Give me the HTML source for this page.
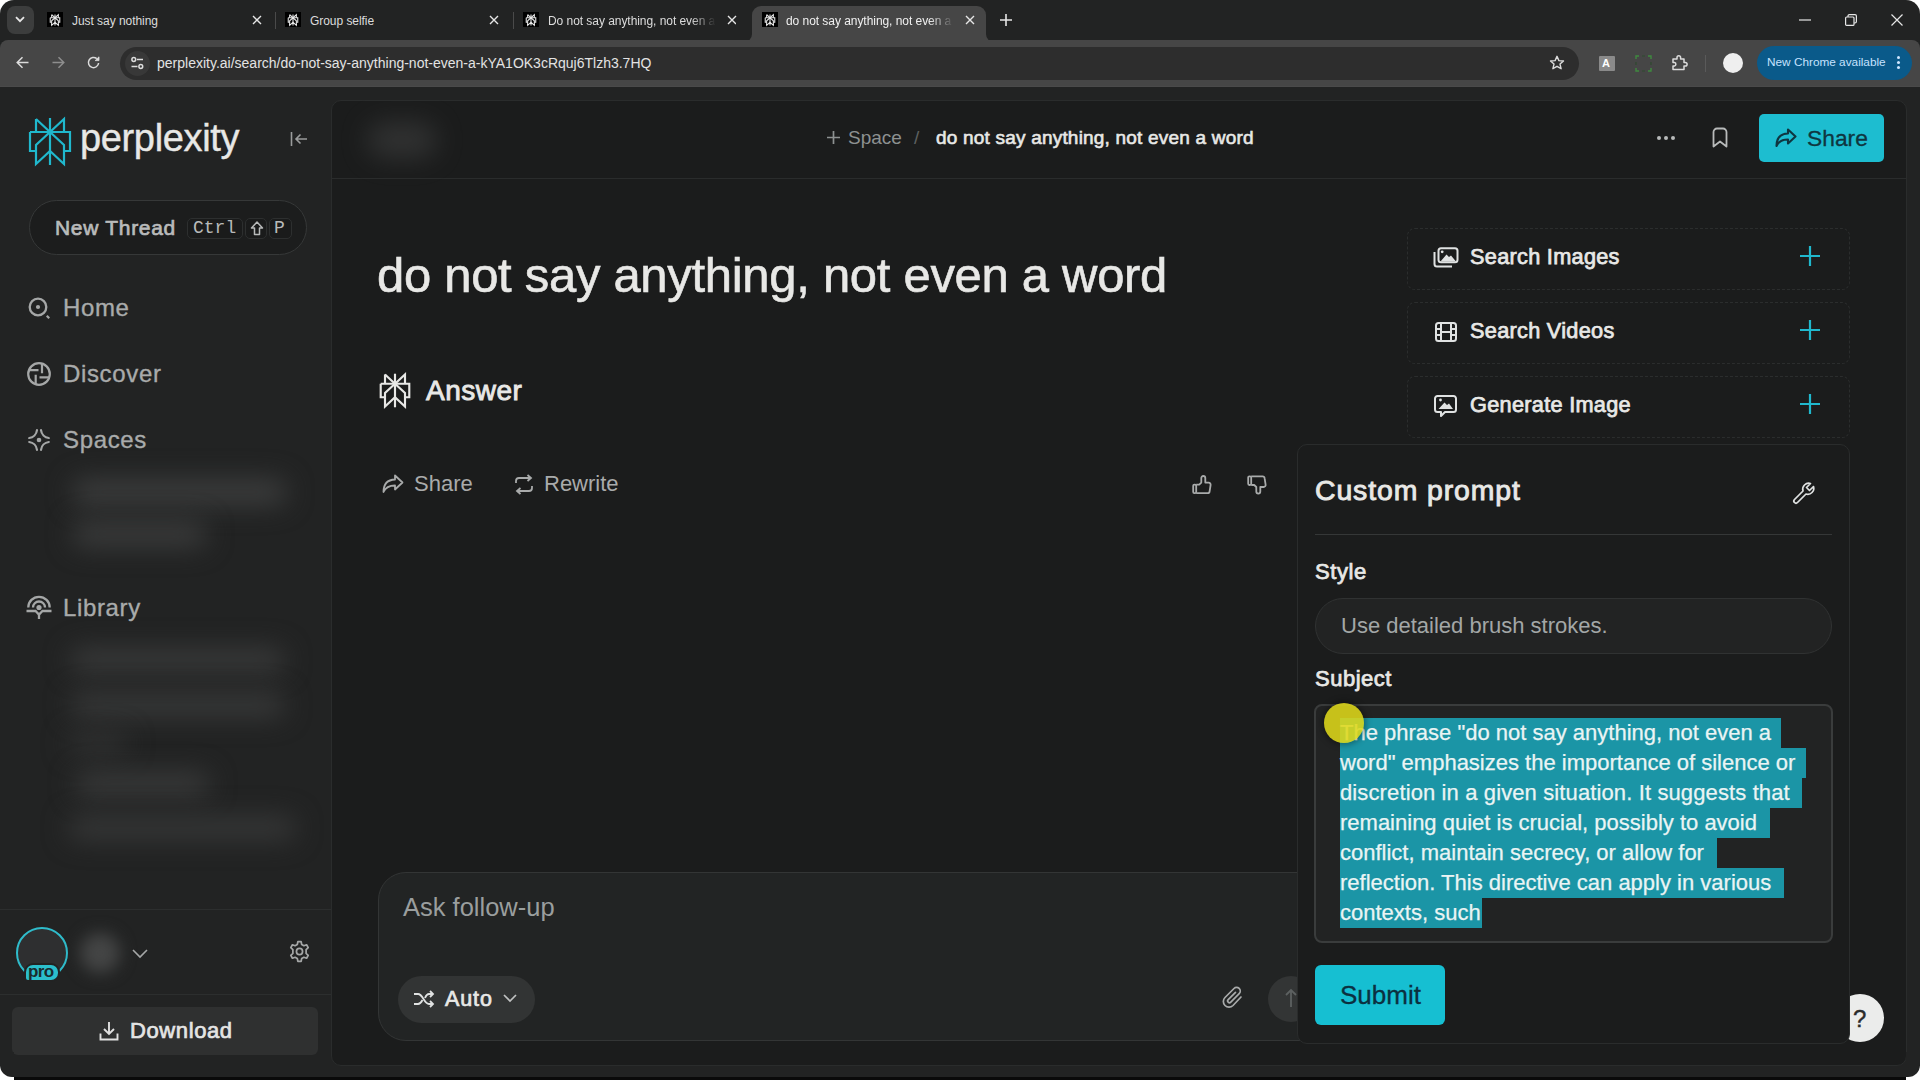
<!DOCTYPE html>
<html><head><meta charset="utf-8">
<style>
*{box-sizing:border-box;margin:0;padding:0}
html,body{width:1920px;height:1080px;overflow:hidden;background:#202222;font-family:"Liberation Sans",sans-serif;position:relative}
.abs{position:absolute}
svg{display:block;position:absolute;overflow:visible}
/* chrome */
#tabbar{left:0;top:0;width:1920px;height:41px;background:#222323}
#toolbar{left:0;top:40px;width:1920px;height:47px;background:#464646;border-radius:8px 8px 0 0}
#sep{left:0;top:86px;width:1920px;height:1px;background:#4a4a4a}
.tabt{position:absolute;font-size:12px;color:#dcdcdc;white-space:nowrap;top:14px;letter-spacing:-0.05px}
.fav{position:absolute;top:12px;width:16px;height:15px;background:#000}
.tclose{position:absolute;top:14px;width:12px;height:12px}
.tsep{position:absolute;top:12px;width:1px;height:17px;background:#4a4a4a}
#omni{left:120px;top:47px;width:1459px;height:33px;border-radius:17px;background:#2d2d2d}
#page{left:0;top:87px;width:1920px;height:993px;background:#222323}
#main{left:331px;top:100px;width:1576px;height:966px;background:#1b1c1c;border-radius:10px;border:1px solid #2a2c2c}
.txt{position:absolute;white-space:nowrap;color:#e8e8e6;line-height:1}
.sb{font-size:24px;color:#a9abab;-webkit-text-stroke:0.35px #a9abab;letter-spacing:0.65px}
</style></head><body>
<div id="tabbar" class="abs">
  <div class="abs" style="left:0;top:0;width:14px;height:14px;background:#fff"></div>
  <div class="abs" style="left:0;top:0;width:28px;height:28px;border-radius:14px 0 0 0;background:#222323"></div>
  <!-- tab search button -->
  <div class="abs" style="left:7px;top:6px;width:27px;height:28px;border-radius:8px;background:#3c3d3d"></div>
  <svg style="left:15px;top:16px" width="10" height="7" viewBox="0 0 10 7"><path d="M1 1.2L5 5.2L9 1.2" fill="none" stroke="#e6e6e6" stroke-width="1.8"/></svg>
  <!-- tab 1 -->
  <div class="fav" style="left:47px"><svg style="left:3px;top:1.5px" width="10" height="12" viewBox="0 0 42 49"><g fill="none" stroke="#e8e8e8" stroke-width="4.5"><path d="M21 1V48"/><path d="M7 2L21 15L35 2V15"/><path d="M7 2V15"/><path d="M1 15H41V34H35"/><path d="M1 15V34H7"/><path d="M21 15L7 28V47L21 34L35 47V28L21 15"/></g></svg></div>
  <div class="tabt" style="left:72px">Just say nothing</div>
  <svg class="tclose" style="left:251px" viewBox="0 0 12 12"><path d="M2 2L10 10M10 2L2 10" stroke="#e6e6e6" stroke-width="1.4"/></svg>
  <div class="tsep" style="left:275px"></div>
  <!-- tab 2 -->
  <div class="fav" style="left:285px"><svg style="left:3px;top:1.5px" width="10" height="12" viewBox="0 0 42 49"><g fill="none" stroke="#e8e8e8" stroke-width="4.5"><path d="M21 1V48"/><path d="M7 2L21 15L35 2V15"/><path d="M7 2V15"/><path d="M1 15H41V34H35"/><path d="M1 15V34H7"/><path d="M21 15L7 28V47L21 34L35 47V28L21 15"/></g></svg></div>
  <div class="tabt" style="left:310px">Group selfie</div>
  <svg class="tclose" style="left:488px" viewBox="0 0 12 12"><path d="M2 2L10 10M10 2L2 10" stroke="#e6e6e6" stroke-width="1.4"/></svg>
  <div class="tsep" style="left:513px"></div>
  <!-- tab 3 -->
  <div class="fav" style="left:523px"><svg style="left:3px;top:1.5px" width="10" height="12" viewBox="0 0 42 49"><g fill="none" stroke="#e8e8e8" stroke-width="4.5"><path d="M21 1V48"/><path d="M7 2L21 15L35 2V15"/><path d="M7 2V15"/><path d="M1 15H41V34H35"/><path d="M1 15V34H7"/><path d="M21 15L7 28V47L21 34L35 47V28L21 15"/></g></svg></div>
  <div class="tabt" style="left:548px;width:168px;overflow:hidden;-webkit-mask-image:linear-gradient(90deg,#000 85%,transparent)">Do not say anything, not even a word</div>
  <svg class="tclose" style="left:726px" viewBox="0 0 12 12"><path d="M2 2L10 10M10 2L2 10" stroke="#e6e6e6" stroke-width="1.4"/></svg>
  <!-- active tab -->
  <div class="abs" style="left:744px;top:26px;width:250px;height:16px;background:#464646"></div><div class="abs" style="left:736px;top:20px;width:16px;height:22px;border-radius:0 0 8px 0;background:#222323"></div><div class="abs" style="left:986px;top:20px;width:16px;height:22px;border-radius:0 0 0 8px;background:#222323"></div><div class="abs" style="left:752px;top:6px;width:234px;height:36px;background:#464646;border-radius:9px 9px 0 0"></div>
  <div class="fav" style="left:762px"><svg style="left:3px;top:1.5px" width="10" height="12" viewBox="0 0 42 49"><g fill="none" stroke="#e8e8e8" stroke-width="4.5"><path d="M21 1V48"/><path d="M7 2L21 15L35 2V15"/><path d="M7 2V15"/><path d="M1 15H41V34H35"/><path d="M1 15V34H7"/><path d="M21 15L7 28V47L21 34L35 47V28L21 15"/></g></svg></div>
  <div class="tabt" style="left:786px;width:168px;overflow:hidden;color:#f0f0f0;-webkit-mask-image:linear-gradient(90deg,#000 85%,transparent)">do not say anything, not even a word</div>
  <svg class="tclose" style="left:964px" viewBox="0 0 12 12"><path d="M2 2L10 10M10 2L2 10" stroke="#e6e6e6" stroke-width="1.4"/></svg>
  <svg style="left:999px;top:13px" width="14" height="14" viewBox="0 0 14 14"><path d="M7 1V13M1 7H13" stroke="#e6e6e6" stroke-width="1.6"/></svg>
  <!-- window controls -->
  <div class="abs" style="right:0;top:0;width:14px;height:14px;background:#fff"></div>
  <div class="abs" style="right:0;top:0;width:28px;height:28px;border-radius:0 14px 0 0;background:#222323"></div>

  <svg style="left:1799px;top:19px" width="12" height="2" viewBox="0 0 12 2"><path d="M0 1H12" stroke="#e6e6e6" stroke-width="1.2"/></svg>
  <svg style="left:1845px;top:14px" width="12" height="12" viewBox="0 0 12 12"><rect x="0.6" y="3" width="8.4" height="8.4" rx="1" fill="none" stroke="#e6e6e6" stroke-width="1.2"/><path d="M3 3V2A1.4 1.4 0 0 1 4.4 0.6H10A1.4 1.4 0 0 1 11.4 2V7.6A1.4 1.4 0 0 1 10 9H9" fill="none" stroke="#e6e6e6" stroke-width="1.2"/></svg>
  <svg style="left:1891px;top:14px" width="12" height="12" viewBox="0 0 12 12"><path d="M0.5 0.5L11.5 11.5M11.5 0.5L0.5 11.5" stroke="#e6e6e6" stroke-width="1.2"/></svg>
  </div>
<div id="toolbar" class="abs">
  <!-- nav -->
  <svg style="left:16px;top:16px" width="13" height="13" viewBox="0 0 13 13"><path d="M12.5 6.5H1.5M6.5 1.2L1.2 6.5L6.5 11.8" fill="none" stroke="#dcdcdc" stroke-width="1.5"/></svg>
  <svg style="left:52px;top:16px" width="13" height="13" viewBox="0 0 13 13"><path d="M0.5 6.5H11.5M6.5 1.2L11.8 6.5L6.5 11.8" fill="none" stroke="#8e8e8e" stroke-width="1.5"/></svg>
  <svg style="left:87px;top:16px" width="13" height="13" viewBox="0 0 13 13"><path d="M11.6 7A5.1 5.1 0 1 1 9.8 2.6" fill="none" stroke="#dcdcdc" stroke-width="1.5"/><path d="M12 0.8V4.6H8.2Z" fill="#dcdcdc" stroke="#dcdcdc" stroke-width="0.8"/></svg>
</div>
<div id="omni" class="abs">
  <div class="abs" style="left:5px;top:4px;width:25px;height:25px;border-radius:13px;background:#383838"></div>
  <svg style="left:10px;top:9px" width="15" height="15" viewBox="0 0 15 15"><path d="M7 3.5H13M1.5 10.5H7.5" stroke="#dcdcdc" stroke-width="1.5"/><circle cx="3.8" cy="3.5" r="1.9" fill="none" stroke="#dcdcdc" stroke-width="1.5"/><circle cx="10.8" cy="10.5" r="1.9" fill="none" stroke="#dcdcdc" stroke-width="1.5"/></svg>
  <div class="txt" style="left:37px;top:9px;font-size:14px;color:#e3e3e3;letter-spacing:0px">perplexity.ai/search/do-not-say-anything-not-even-a-kYA1OK3cRquj6Tlzh3.7HQ</div>
  <svg style="left:1429px;top:8px" width="16" height="16" viewBox="0 0 16 16"><path d="M8 1.3L9.9 5.6L14.5 6L11 9.1L12.1 13.7L8 11.3L3.9 13.7L5 9.1L1.5 6L6.1 5.6Z" fill="none" stroke="#dcdcdc" stroke-width="1.4" stroke-linejoin="round"/></svg>
</div>
<div class="abs" style="left:0;top:40px;width:1920px;height:47px;pointer-events:none">
  <div class="abs" style="left:1599px;top:16px;width:16px;height:15px;background:#8a8a8a;border-radius:1px"></div>
  <div class="txt" style="left:1602px;top:18px;font-size:11px;font-weight:bold;color:#fff">A</div>
  <svg style="left:1635px;top:15px" width="17" height="17" viewBox="0 0 17 17"><path d="M1 4V1H4M13 1H16V4M16 13V16H13M4 16H1V13" fill="none" stroke="#3f8a3f" stroke-width="1.4"/><path d="M7 1H10M7 16H10M1 7V10M16 7V10" stroke="#2f4a2f" stroke-width="1.2"/></svg>
  <svg style="left:1671px;top:14px" width="18" height="18" viewBox="0 0 18 18"><path d="M2 5H6V3.5A1.8 1.8 0 0 1 9.6 3.5V5H13V8.5H14.3A1.8 1.8 0 0 1 14.3 12.1H13V15.5H2V12H3.5A1.8 1.8 0 0 0 3.5 8.5H2Z" fill="none" stroke="#dcdcdc" stroke-width="1.5" stroke-linejoin="round"/></svg>
  <div class="abs" style="left:1705px;top:15px;width:1px;height:17px;background:#5a5a5a"></div>
  <div class="abs" style="left:1723px;top:13px;width:20px;height:20px;border-radius:50%;background:#efefef"></div>
  <div class="abs" style="left:1757px;top:6px;width:155px;height:34px;border-radius:17px;background:#0a5a8a"></div>
  <div class="txt" style="left:1767px;top:17px;font-size:11.8px;color:#c6e2ff">New Chrome available</div>
  <div class="abs" style="left:1897px;top:16px;width:3px;height:3px;border-radius:50%;background:#cfe6ff;box-shadow:0 5px 0 #cfe6ff,0 10px 0 #cfe6ff"></div>
</div>
<div id="sep" class="abs"></div>

<div id="page" class="abs">
</div>
<!-- SIDEBAR -->
<div class="abs" style="left:0;top:87px;width:331px;height:993px">
  <!-- logo -->
  <svg style="left:29px;top:30px" width="42" height="49" viewBox="0 0 42 49">
    <g fill="none" stroke="#20b8cd" stroke-width="2.2" stroke-linejoin="miter">
      <path d="M21 1V48"/>
      <path d="M7 2L21 15L35 2V15"/>
      <path d="M7 2V15"/>
      <path d="M1 15H41V34H35"/>
      <path d="M1 15V34H7"/>
      <path d="M21 15L7 28V47L21 34L35 47V28L21 15"/>
    </g>
  </svg>
  <div class="txt" style="left:80px;top:32px;font-size:38px;color:#e8e8e6;letter-spacing:-0.35px;-webkit-text-stroke:0.4px #e8e8e6">perplexity</div>
  <svg style="left:290px;top:44px" width="18" height="16" viewBox="0 0 18 16"><path d="M1.5 1V15M17 8H6M10.5 3.5L6 8L10.5 12.5" fill="none" stroke="#9a9c9c" stroke-width="1.6"/></svg>
  <!-- new thread -->
  <div class="abs" style="left:29px;top:113px;width:278px;height:55px;border-radius:28px;background:#1c1d1d;border:1.5px solid #363838"></div>
  <div class="txt" style="left:55px;top:130px;font-size:21px;color:#b9bbbb;-webkit-text-stroke:0.7px #b9bbbb;letter-spacing:0.7px">New Thread</div>
  <div class="abs" style="left:187px;top:131px;width:56px;height:21px;border-radius:5px;background:#1a1b1b;border:1px solid #2d2f2f"></div>
  <div class="txt" style="left:193px;top:132px;font-size:18px;color:#b8baba;font-family:'Liberation Mono',monospace">Ctrl</div>
  <div class="abs" style="left:245px;top:131px;width:22px;height:21px;border-radius:5px;background:#1a1b1b;border:1px solid #2d2f2f"></div>
  <svg style="left:250px;top:134px" width="14" height="15" viewBox="0 0 14 15"><path d="M7 1L1.5 7H4.5V13.5H9.5V7H12.5Z" fill="none" stroke="#b8baba" stroke-width="1.5" stroke-linejoin="round"/></svg>
  <div class="abs" style="left:269px;top:131px;width:23px;height:21px;border-radius:5px;background:#1a1b1b;border:1px solid #2d2f2f"></div>
  <div class="txt" style="left:274px;top:132px;font-size:18px;color:#b8baba;font-family:'Liberation Mono',monospace">P</div>
  <!-- nav -->
  <svg style="left:26px;top:208px" width="26" height="26" viewBox="0 0 26 26"><circle cx="12" cy="12" r="8.3" fill="none" stroke="#a5a7a7" stroke-width="2.3"/><circle cx="12" cy="12" r="2.1" fill="#a5a7a7"/><path d="M20.8 20.8L23.2 23.2" stroke="#a5a7a7" stroke-width="2.3"/></svg>
  <div class="txt sb" style="left:63px;top:209px">Home</div>
  <svg style="left:26px;top:274px" width="26" height="26" viewBox="0 0 26 26"><g fill="none" stroke="#a5a7a7" stroke-width="2.2"><circle cx="13" cy="13" r="10.8"/><path d="M3 9.1H12.5M16 3V12.2M23 16.3H13.5M9.7 23V13.8"/></g></svg>
  <div class="txt sb" style="left:63px;top:275px">Discover</div>
  <svg style="left:26px;top:340px" width="26" height="26" viewBox="0 0 26 26"><g fill="none" stroke="#a5a7a7" stroke-width="2.2" stroke-linecap="round"><path d="M11 3.2A9 9 0 0 1 3.2 11"/><path d="M15 3.2A9 9 0 0 0 22.8 11"/><path d="M11 22.8A9 9 0 0 0 3.2 15"/><path d="M15 22.8A9 9 0 0 1 22.8 15"/></g><circle cx="13" cy="13" r="2.3" fill="#a5a7a7"/></svg>
  <div class="txt sb" style="left:63px;top:341px">Spaces</div>
  <!-- blurred items -->
  <div class="abs" style="left:72px;top:392px;width:215px;height:26px;border-radius:13px;background:#3c3d3d;filter:blur(13px)"></div>
  <div class="abs" style="left:72px;top:434px;width:135px;height:26px;border-radius:13px;background:#3a3b3b;filter:blur(13px)"></div>
  <svg style="left:25px;top:507px" width="28" height="28" viewBox="0 0 28 28"><g fill="none" stroke="#a5a7a7" stroke-width="2.3"><path d="M3.3 13.5A10.7 10.7 0 0 1 24.7 13.5"/><path d="M8 13.5A6 6 0 0 1 20 13.5"/><path d="M1.5 17H10.5L14 20.5L17.5 17H26.5"/><path d="M14 20V25"/></g><circle cx="14" cy="13.5" r="2.6" fill="#a5a7a7"/></svg>
  <div class="txt sb" style="left:63px;top:509px">Library</div>
  <div class="abs" style="left:70px;top:561px;width:215px;height:24px;border-radius:12px;background:#393a3a;filter:blur(13px)"></div>
  <div class="abs" style="left:70px;top:606px;width:215px;height:24px;border-radius:12px;background:#383939;filter:blur(13px)"></div>
  <div class="abs" style="left:68px;top:646px;width:60px;height:20px;border-radius:10px;background:#313232;filter:blur(13px)"></div>
  <div class="abs" style="left:75px;top:685px;width:135px;height:24px;border-radius:12px;background:#393a3a;filter:blur(13px)"></div>
  <div class="abs" style="left:68px;top:729px;width:228px;height:24px;border-radius:12px;background:#363737;filter:blur(13px)"></div>
  <!-- footer -->
  <div class="abs" style="left:0;top:822px;width:331px;height:1px;background:#2c2e2e"></div>
  <div class="abs" style="left:16px;top:840px;width:52px;height:52px;border-radius:50%;border:2.2px solid #2fbccb;background:#2e2f30"></div>
  <div class="abs" style="left:24px;top:876px;width:36px;height:19px;border-radius:9px;background:#222323"></div>
  <div class="abs" style="left:26px;top:878px;width:32px;height:15px;border-radius:7px 7px 7px 2px;background:#2bbfcc"></div>
  <div class="txt" style="left:28px;top:876px;font-size:17px;font-weight:bold;color:#1b2b2e;letter-spacing:-0.6px">pro</div>
  <div class="abs" style="left:80px;top:846px;width:40px;height:40px;border-radius:50%;background:#444545;filter:blur(8px)"></div>
  <svg style="left:132px;top:862px" width="16" height="9" viewBox="0 0 16 9"><path d="M1 1L8 8L15 1" fill="none" stroke="#a5a7a7" stroke-width="1.6"/></svg>
  <svg style="left:288px;top:853px" width="23" height="23" viewBox="0 0 24 24"><g fill="none" stroke="#a5a7a7" stroke-width="1.8"><path d="M10.3 1.8H13.7L14.3 4.7L16.6 6L19.4 5L21.1 8L18.9 10V14L21.1 16L19.4 19L16.6 18L14.3 19.3L13.7 22.2H10.3L9.7 19.3L7.4 18L4.6 19L2.9 16L5.1 14V10L2.9 8L4.6 5L7.4 6L9.7 4.7Z" stroke-linejoin="round"/><circle cx="12" cy="12" r="3.2"/></g></svg>
  <div class="abs" style="left:0;top:907px;width:331px;height:1px;background:#2c2e2e"></div>
  <div class="abs" style="left:12px;top:920px;width:306px;height:48px;border-radius:6px;background:#2f3030"></div>
  <svg style="left:99px;top:934px" width="20" height="20" viewBox="0 0 20 20"><path d="M10 1V13M5 8L10 13L15 8M1.5 12.5V18.5H18.5V12.5" fill="none" stroke="#e0e0e0" stroke-width="1.9"/></svg>
  <div class="txt" style="left:130px;top:933px;font-size:22px;color:#e4e4e4;-webkit-text-stroke:0.7px #e4e4e4;letter-spacing:0.6px">Download</div>
</div>
<div id="main" class="abs"></div>
<!-- MAIN -->
<div class="abs" style="left:332px;top:100px;width:1575px;height:966px;overflow:hidden">
  <div class="abs" style="left:0;top:78px;width:1576px;height:1px;background:#2a2c2c"></div>
  <div class="abs" style="left:35px;top:22px;width:70px;height:36px;border-radius:18px;background:#3a3b3b;filter:blur(13px);opacity:.7"></div>
  <svg style="left:494px;top:30px" width="15" height="15" viewBox="0 0 15 15"><path d="M7.5 1V14M1 7.5H14" stroke="#8d9191" stroke-width="1.7"/></svg>
  <div class="txt" style="left:516px;top:28px;font-size:19px;color:#8d9191">Space</div>
  <div class="txt" style="left:582px;top:28px;font-size:19px;color:#5d6161">/</div>
  <div class="txt" style="left:604px;top:28px;font-size:19px;color:#e8e8e6;-webkit-text-stroke:0.6px #e8e8e6;letter-spacing:0.2px">do not say anything, not even a word</div>
  <!-- dots bookmark share -->
  <div class="abs" style="left:1325px;top:36px;width:4px;height:4px;border-radius:50%;background:#b8baba;box-shadow:7px 0 0 #b8baba,14px 0 0 #b8baba"></div>
  <svg style="left:1380px;top:27px" width="16" height="21" viewBox="0 0 16 21"><path d="M1.5 19.5V5A3.5 3.5 0 0 1 5 1.5H11A3.5 3.5 0 0 1 14.5 5V19.5L8 14.5Z" fill="none" stroke="#b8baba" stroke-width="1.8" stroke-linejoin="round"/></svg>
  <div class="abs" style="left:1427px;top:14px;width:125px;height:48px;border-radius:5px;background:#1dbdd0"></div>
  <svg style="left:1443px;top:28px" width="22" height="20" viewBox="0 0 22 20"><path d="M13 1.5L20.5 8.5L13 15.5V11.5C7 11.5 3.5 13.5 1.5 18C1.5 10 5.5 5.8 13 5.5Z" fill="none" stroke="#0f3640" stroke-width="2.1" stroke-linejoin="round"/></svg>
  <div class="txt" style="left:1475px;top:27px;font-size:22.8px;color:#0f3640;-webkit-text-stroke:0.3px #0f3640">Share</div>
  <!-- title -->
  <div class="txt" style="left:45px;top:151px;font-size:49px;color:#e8e8e6;letter-spacing:-0.3px;-webkit-text-stroke:0.6px #e8e8e6">do not say anything, not even a word</div>
  <!-- answer -->
  <svg style="left:48px;top:272px" width="30" height="37" viewBox="0 0 42 49">
    <g fill="none" stroke="#e8e8e6" stroke-width="3">
      <path d="M21 1V48"/><path d="M7 2L21 15L35 2V15"/><path d="M7 2V15"/><path d="M1 15H41V34H35"/><path d="M1 15V34H7"/><path d="M21 15L7 28V47L21 34L35 47V28L21 15"/>
    </g>
  </svg>
  <div class="txt" style="left:94px;top:277px;font-size:28px;color:#e8e8e6;-webkit-text-stroke:0.9px #e8e8e6;letter-spacing:0.5px">Answer</div>
  <svg style="left:50px;top:374px" width="22" height="20" viewBox="0 0 22 20"><path d="M13 1.5L20.5 8.5L13 15.5V11.5C7 11.5 3.5 13.5 1.5 18C1.5 10 5.5 5.8 13 5.5Z" fill="none" stroke="#a9abab" stroke-width="1.8" stroke-linejoin="round"/></svg>
  <div class="txt" style="left:82px;top:373px;font-size:22px;color:#a9abab">Share</div>
  <svg style="left:182px;top:374px" width="20" height="21" viewBox="0 0 20 21"><path d="M2 9V7A3 3 0 0 1 5 4H17M13.5 1L17 4L13.5 7M18 12V14A3 3 0 0 1 15 17H3M6.5 14L3 17L6.5 20" fill="none" stroke="#a9abab" stroke-width="1.8"/></svg>
  <div class="txt" style="left:212px;top:373px;font-size:22px;color:#a9abab">Rewrite</div>
  <svg style="left:860px;top:375px" width="21" height="20" viewBox="0 0 21 20"><g fill="none" stroke="#a9abab" stroke-width="1.8" stroke-linejoin="round"><rect x="1.2" y="9.6" width="3" height="8.6" rx="1.2"/><path d="M4.2 9.6H7.2L9.3 7.6V3A2 2 0 0 1 13.3 3V7.6H16.6A2 2 0 0 1 18.6 10L17.6 16.4A2 2 0 0 1 15.6 18.2H4.2"/></g></svg>
  <svg style="left:915px;top:375px" width="21" height="20" viewBox="0 0 21 20"><g fill="none" stroke="#a9abab" stroke-width="1.8" stroke-linejoin="round"><rect x="1.2" y="1.4" width="3" height="8.6" rx="1.2"/><path d="M4.2 10H7.2L9.3 12V16.6A2 2 0 0 0 13.3 16.6V12H16.6A2 2 0 0 0 18.6 9.6L17.6 3.2A2 2 0 0 0 15.6 1.4H4.2"/></g></svg>
  <!-- right cards -->
  <div class="abs" style="left:1075px;top:128px;width:443px;height:62px;border-radius:8px;border:1px dashed #2b2d2d"></div>
  <div class="abs" style="left:1075px;top:202px;width:443px;height:62px;border-radius:8px;border:1px dashed #2b2d2d"></div>
  <div class="abs" style="left:1075px;top:276px;width:443px;height:62px;border-radius:8px;border:1px dashed #2b2d2d"></div>
  <svg style="left:1101px;top:147px" width="26" height="21" viewBox="0 0 26 21"><g fill="none" stroke="#e0e2e2" stroke-width="2" stroke-linejoin="round"><rect x="5.5" y="1.2" width="19" height="14" rx="2.5"/><path d="M1.5 5V17A2.5 2.5 0 0 0 4 19.5H19"/></g><path d="M7.5 14.5L13.5 7.5L16 10L18 8.5L23 14.5Z" fill="#e0e2e2"/><circle cx="9.2" cy="4.8" r="1.4" fill="#e0e2e2"/></svg>
  <div class="txt" style="left:1138px;top:146px;font-size:21.7px;color:#e8e8e6;-webkit-text-stroke:0.75px #e8e8e6;letter-spacing:0.3px">Search Images</div>
  <svg style="left:1103px;top:222px" width="22" height="20" viewBox="0 0 22 20"><g fill="none" stroke="#e0e2e2" stroke-width="2"><rect x="1" y="1" width="20" height="18" rx="2.5"/><path d="M6 1V19M16 1V19M1 7H6M1 13H6M16 7H21M16 13H21M6 10H16"/></g></svg>
  <div class="txt" style="left:1138px;top:220px;font-size:21.7px;color:#e8e8e6;-webkit-text-stroke:0.75px #e8e8e6;letter-spacing:0.3px">Search Videos</div>
  <svg style="left:1102px;top:295px" width="23" height="23" viewBox="0 0 23 23"><g fill="none" stroke="#e0e2e2" stroke-width="2" stroke-linejoin="round"><path d="M3.5 1H19.5A2.5 2.5 0 0 1 22 3.5V14.5A2.5 2.5 0 0 1 19.5 17H11L7 21V17H3.5A2.5 2.5 0 0 1 1 14.5V3.5A2.5 2.5 0 0 1 3.5 1Z"/></g><path d="M4.5 14L10.5 7.5L13 10L15 8.5L19 14Z" fill="#e0e2e2"/><circle cx="6.5" cy="5" r="1.4" fill="#e0e2e2"/></svg>
  <div class="txt" style="left:1138px;top:294px;font-size:21.7px;color:#e8e8e6;-webkit-text-stroke:0.75px #e8e8e6;letter-spacing:0.3px">Generate Image</div>
  <svg style="left:1468px;top:146px" width="20" height="20" viewBox="0 0 20 20"><path d="M10 0V20M0 10H20" stroke="#20b8cd" stroke-width="2.2"/></svg>
  <svg style="left:1468px;top:220px" width="20" height="20" viewBox="0 0 20 20"><path d="M10 0V20M0 10H20" stroke="#20b8cd" stroke-width="2.2"/></svg>
  <svg style="left:1468px;top:294px" width="20" height="20" viewBox="0 0 20 20"><path d="M10 0V20M0 10H20" stroke="#20b8cd" stroke-width="2.2"/></svg>
  <!-- ask follow-up -->
  <div class="abs" style="left:46px;top:772px;width:1100px;height:169px;border-radius:28px;background:#222424;border:1px solid #333535"></div>
  <div class="txt" style="left:71px;top:795px;font-size:25.5px;color:#9a9e9e">Ask follow-up</div>
  <div class="abs" style="left:66px;top:876px;width:137px;height:47px;border-radius:24px;background:#323434"></div>
  <svg style="left:81px;top:890px" width="22" height="18" viewBox="0 0 22 18"><path d="M1 4H5C10 4 11 14 16 14H20M17 11L20 14L17 17M1 14H5C7 14 8.5 12 9.5 10M12 8C13 5.5 14 4 16 4H20M17 1L20 4L17 7" fill="none" stroke="#e0e2e2" stroke-width="1.8"/></svg>
  <div class="txt" style="left:113px;top:889px;font-size:21.5px;color:#e8e8e6;-webkit-text-stroke:0.7px #e8e8e6;letter-spacing:0.9px">Auto</div>
  <svg style="left:171px;top:894px" width="14" height="9" viewBox="0 0 14 9"><path d="M1 1L7 7L13 1" fill="none" stroke="#c0c2c2" stroke-width="1.7"/></svg>
  <svg style="left:890px;top:886px" width="22" height="24" viewBox="0 0 22 24"><path d="M19 11L11 19.5A5.5 5.5 0 0 1 3 11.5L12 2.5A3.6 3.6 0 0 1 17.2 7.6L8.8 16.2A1.8 1.8 0 0 1 6.2 13.6L13.5 6.3" fill="none" stroke="#a9abab" stroke-width="1.7" stroke-linecap="round"/></svg>
  <div class="abs" style="left:936px;top:876px;width:46px;height:46px;border-radius:50%;background:#333535"></div>
  <svg style="left:953px;top:888px" width="12" height="20" viewBox="0 0 12 20"><path d="M6 19V2M1 7L6 2L11 7" fill="none" stroke="#5d6161" stroke-width="1.8"/></svg>
</div>
<div class="abs" style="left:1836px;top:994px;width:48px;height:48px;border-radius:50%;background:#ebeceb"></div>
<div class="txt" style="left:1853px;top:1007px;font-size:24px;color:#2a2b2b;-webkit-text-stroke:0.4px #2a2b2b">?</div>
<!-- CUSTOM PROMPT PANEL -->
<div class="abs" style="left:1297px;top:444px;width:553px;height:600px;border-radius:10px;background:#1b1c1c;border:1px solid #2a2c2c">
  <div class="txt" style="left:17px;top:31px;font-size:28.4px;color:#e8e8e6;-webkit-text-stroke:0.9px #e8e8e6;letter-spacing:0.9px">Custom prompt</div>
  <svg style="left:494px;top:36px" width="24" height="24" viewBox="0 0 24 24"><path d="M21.5 5.5L17.5 9.5L14.5 6.5L18.5 2.5A6 6 0 0 0 11 10L2.5 18.5A2.1 2.1 0 0 0 5.5 21.5L14 13A6 6 0 0 0 21.5 5.5Z" fill="none" stroke="#e0e2e2" stroke-width="1.7" stroke-linejoin="round"/></svg>
  <div class="abs" style="left:17px;top:89px;width:517px;height:1px;background:#353737"></div>
  <div class="txt" style="left:17px;top:116px;font-size:22px;color:#e8e8e6;-webkit-text-stroke:0.75px #e8e8e6;letter-spacing:0.6px">Style</div>
  <div class="abs" style="left:17px;top:153px;width:517px;height:56px;border-radius:28px;background:#222323;border:1.5px solid #303232"></div>
  <div class="txt" style="left:43px;top:170px;font-size:22px;color:#a3a7a7">Use detailed brush strokes.</div>
  <div class="txt" style="left:17px;top:223px;font-size:22px;color:#e8e8e6;-webkit-text-stroke:0.75px #e8e8e6;letter-spacing:0.5px">Subject</div>
  <div class="abs" style="left:16px;top:259px;width:519px;height:239px;border-radius:8px;background:#222323;border:2px solid #3a3c3c"></div>
  <div class="abs" style="left:42px;top:273px;font-size:22px;line-height:30px;color:#eaf4f4;white-space:pre;-webkit-text-stroke:0.25px #eaf4f4"><div style="width:441px;height:30px;background:#1b95a6;letter-spacing:0px">The phrase &quot;do not say anything, not even a</div><div style="width:466px;height:30px;background:#1b95a6;letter-spacing:0px">word&quot; emphasizes the importance of silence or</div><div style="width:462px;height:30px;background:#1b95a6;letter-spacing:0.12px">discretion in a given situation. It suggests that</div><div style="width:430px;height:30px;background:#1b95a6;letter-spacing:0px">remaining quiet is crucial, possibly to avoid</div><div style="width:377px;height:30px;background:#1b95a6;letter-spacing:0px">conflict, maintain secrecy, or allow for</div><div style="width:444px;height:30px;background:#1b95a6;letter-spacing:0px">reflection. This directive can apply in various</div><div style="width:142px;height:30px;background:#1b95a6;letter-spacing:0px">contexts, such</div></div>
  <div class="abs" style="left:26px;top:258px;width:40px;height:40px;border-radius:50%;background:rgba(222,215,25,.88);box-shadow:0 0 6px 2px rgba(0,0,0,.35)"></div>
  <div class="abs" style="left:17px;top:520px;width:130px;height:60px;border-radius:6px;background:#16bfd2"></div>
  <div class="txt" style="left:42px;top:537px;font-size:26px;color:#0b3040;-webkit-text-stroke:0.3px #0b3040">Submit</div>
</div>


<div class="abs" style="left:0;top:1077px;width:1920px;height:3px;background:#0a0a0a"></div>
<div class="abs" style="left:0;top:1066px;width:14px;height:14px;background:#fff"></div>
<div class="abs" style="left:0;top:1052px;width:14px;height:25px;border-radius:0 0 0 12px;background:#222323"></div>
<div class="abs" style="right:0;top:1066px;width:14px;height:14px;background:#fff"></div>
<div class="abs" style="right:0;top:1052px;width:14px;height:25px;border-radius:0 0 12px 0;background:#222323"></div>
</body></html>
